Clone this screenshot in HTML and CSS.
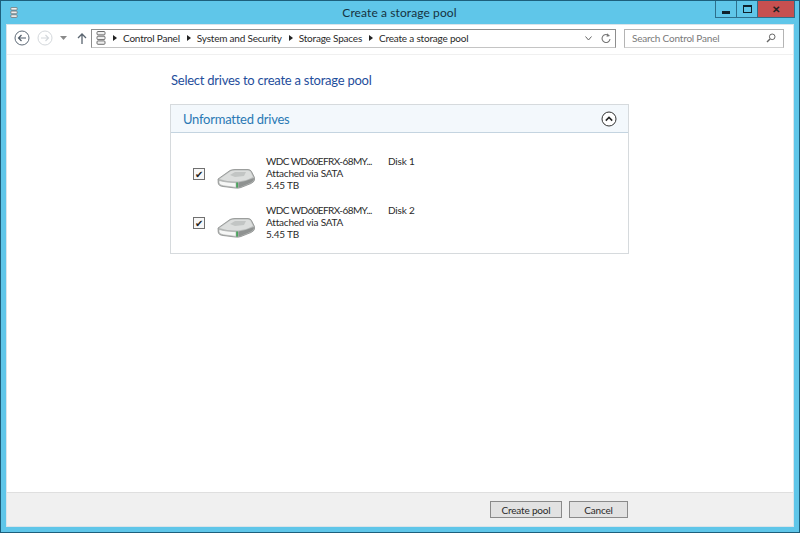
FILE: index.html
```html
<!DOCTYPE html>
<html lang="en">

<head>
  <meta charset="UTF-8">
  <title>Create a storage pool</title>
  <link rel="stylesheet" href="styles.css">
</head>

<body>
  <svg class="defs" width="0" height="0">
    <symbol id="stack" viewBox="0 0 10 14">
      <rect x="1" y="0.5" width="8" height="3.4" rx="1" fill="#eee" stroke="#6f6f6f" />
      <rect x="1" y="5.2" width="8" height="3.4" rx="1" fill="#eee" stroke="#6f6f6f" />
      <rect x="1" y="9.9" width="8" height="3.4" rx="1" fill="#eee" stroke="#6f6f6f" />
    </symbol>
    <symbol id="disk" viewBox="0 0 38 24">
      <path d="M1 13 L13 4.5 Q15 3.5 18 3.5 L31 3.5 Q33.5 3.5 34.5 5.5 L37.5 11.5 L37.5 14 Q37 16 34 17.5 L24 21.5 Q21.5 22.5 18 22 L6 20.5 Q1.5 20 1.2 17 Z" fill="#b9bcbb" stroke="#7f8281" stroke-width=".7" />
      <path d="M2.5 13 L14 5 Q15.5 4.4 18 4.4 L31 4.4 Q32.8 4.4 33.6 6 L36 11 Q30 14.5 21 15.5 Q9 15.5 2.5 13 Z" fill="#dcdedd" />
      <path d="M13 9 L18 6 L29 6 L27 10 L18 11 Z" fill="#c2c5c4" />
      <path d="M2 14.5 Q9 16.6 19 16.7 L19 21.4 L6.5 19.8 Q2.2 19.2 2 16.8 Z" fill="#f6f7f6" stroke="#9fa1a0" stroke-width=".5" />
      <rect x="19.2" y="16.4" width="1.8" height="5.2" fill="#4aa55e" />
      <path d="M21.4 16.4 Q30 15 36.8 12 L36.8 13.8 Q36.4 15.4 33.5 16.8 L24 20.7 Q22.6 21.2 21.4 21.3 Z" fill="#8f9291" />
    </symbol>
  </svg>

  <div class="window">
    <header class="titlebar">
      <svg class="titlebar__icon"><use href="#stack" /></svg>
      <h1 class="titlebar__text">Create a storage pool</h1>
      <div class="controls">
        <div class="controls__btn controls__btn--min"><span class="glyph-min"></span></div>
        <div class="controls__btn controls__btn--max"><span class="glyph-max"></span></div>
        <div class="controls__btn controls__btn--close">&#x2715;</div>
      </div>
    </header>

    <div class="client">
      <nav class="toolbar">
        <svg class="nav-icon" width="16" height="16" viewBox="0 0 16 16">
          <circle cx="8" cy="8" r="7" fill="#fff" stroke="#5f6b78" />
          <path d="M12 8H4.5M7.5 5L4.5 8L7.5 11" fill="none" stroke="#4f5b68" stroke-width="1.2" />
        </svg>
        <svg class="nav-icon nav-icon--fwd" width="16" height="16" viewBox="0 0 16 16">
          <circle cx="8" cy="8" r="7" fill="#fff" stroke="#d4d8dc" />
          <path d="M4 8H11.5M8.5 5L11.5 8L8.5 11" fill="none" stroke="#d4d8dc" stroke-width="1.2" />
        </svg>
        <svg class="nav-icon nav-icon--drop" width="7" height="4" viewBox="0 0 7 4">
          <path d="M0 0H7L3.5 4Z" fill="#8a8a8a" />
        </svg>
        <svg class="nav-icon nav-icon--up" width="10" height="11" viewBox="0 0 10 11">
          <path d="M5 11V1M1 5L5 1L9 5" fill="none" stroke="#5a6570" stroke-width="1.3" />
        </svg>

        <div class="address">
          <svg class="address__icon"><use href="#stack" /></svg>
          <span class="crumb">Control Panel</span>
          <span class="crumb">System and Security</span>
          <span class="crumb">Storage Spaces</span>
          <span class="crumb">Create a storage pool</span>
          <svg class="address__chev" width="7" height="5" viewBox="0 0 7 5">
            <path d="M.5 .5L3.5 4L6.5 .5" fill="none" stroke="#666" />
          </svg>
          <svg class="address__refresh" width="10" height="11" viewBox="0 0 10 11">
            <path d="M8 2.8A4 4 0 1 0 9 6" fill="none" stroke="#777" stroke-width="1.1" />
            <path d="M6 .3L9 3L5.6 3.8Z" fill="#777" />
          </svg>
        </div>

        <div class="search">
          <span class="search__text">Search Control Panel</span>
          <svg width="10" height="10" viewBox="0 0 10 10">
            <circle cx="6.2" cy="3.8" r="2.8" fill="none" stroke="#666" />
            <path d="M4 6L1 9" stroke="#666" stroke-width="1.4" />
          </svg>
        </div>
      </nav>

      <main class="main">
        <h2 class="main__title">Select drives to create a storage pool</h2>

        <section class="panel">
          <div class="panel__head">
            <span class="panel__label">Unformatted drives</span>
            <svg width="16" height="16" viewBox="0 0 16 16">
              <circle cx="8" cy="8" r="7" fill="#fff" stroke="#333" />
              <path d="M4.8 9.6L8 6.4L11.2 9.6" fill="none" stroke="#222" stroke-width="1.5" />
            </svg>
          </div>

          <div class="drive-list">
            <div class="drive">
              <span class="drive__check">&#x2714;</span>
              <svg class="drive__icon"><use href="#disk" /></svg>
              <div class="drive__info">
                <span class="drive__model">WDC WD60EFRX-68MY...</span>
                <span>Attached via SATA</span>
                <span>5.45 TB</span>
              </div>
              <span class="drive__name">Disk 1</span>
            </div>

            <div class="drive">
              <span class="drive__check">&#x2714;</span>
              <svg class="drive__icon"><use href="#disk" /></svg>
              <div class="drive__info">
                <span class="drive__model">WDC WD60EFRX-68MY...</span>
                <span>Attached via SATA</span>
                <span>5.45 TB</span>
              </div>
              <span class="drive__name">Disk 2</span>
            </div>
          </div>
        </section>
      </main>

      <footer class="footer">
        <button type="button" class="btn btn--create">Create pool</button>
        <button type="button" class="btn btn--cancel">Cancel</button>
      </footer>
    </div>
  </div>
</body>

</html>
```

FILE: styles.css
```css
* {
  box-sizing: border-box;
}

html,
body {
  height: 100%;
}

body {
  margin: 0;
  font-family: Lato, Roboto, sans-serif;
  font-size: 10px;
  letter-spacing: -.2px;
  color: #2a2a2a;
}

.defs {
  position: absolute;
}

.window {
  display: flex;
  flex-direction: column;
  height: 533px;
  padding: 0 5px 5px;
  background: #5fc6e9;
  border: 1px solid #1d5f7c;
}

.titlebar {
  display: flex;
  flex: none;
  align-items: flex-start;
  justify-content: space-between;
  height: 23px;
}

.titlebar__icon {
  width: 8px;
  height: 11px;
  margin: 6px 0 0 4px;
}

.titlebar__text {
  margin: 4px 0 0 66px;
  font-size: 12px;
  font-weight: 400;
  line-height: 16px;
  letter-spacing: .1px;
  color: #16323f;
}

.controls {
  display: flex;
  height: 17px;
  margin-right: -1px;
  border: 1px solid #2d6f8c;
  border-top: none;
}

.controls__btn {
  display: flex;
  align-items: center;
  justify-content: center;
  width: 21px;
  border-right: 1px solid #2d6f8c;
}

.controls__btn--close {
  width: 36px;
  border-right: none;
  background: #c75050;
  color: #222;
  font-size: 10px;
  font-weight: 700;
}

.glyph-min {
  width: 8px;
  height: 3px;
  margin-top: 6px;
  background: #10222c;
}

.glyph-max {
  width: 9px;
  height: 8px;
  border: 1px solid #10222c;
  border-top-width: 2px;
}

.client {
  display: flex;
  flex: 1;
  flex-direction: column;
  background: #fff;
  border: 1px solid #d9e4ea;
}

.toolbar {
  display: flex;
  flex: none;
  align-items: center;
  height: 30px;
  padding: 0 0 3px 7px;
  border-bottom: 1px solid #f0f0f0;
}

.nav-icon--fwd {
  margin-left: 7px;
}

.nav-icon--drop {
  margin-left: 7px;
}

.nav-icon--up {
  margin-left: 10px;
}

.address {
  display: flex;
  align-items: center;
  width: 525px;
  height: 19px;
  margin-left: 4px;
  padding: 0 4px 0 4px;
  border: 1px solid #8e8e8e;
  border-bottom-color: #c4c4c4;
}

.address__icon {
  width: 10px;
  height: 14px;
  margin-right: 7px;
}

.crumb {
  display: flex;
  align-items: center;
  margin-right: 7px;
  white-space: nowrap;
}

.crumb::before {
  content: "";
  margin-right: 6px;
  border-left: 4px solid #222;
  border-top: 3px solid transparent;
  border-bottom: 3px solid transparent;
}

.address__chev {
  margin-left: auto;
  margin-right: 9px;
}

.search {
  display: flex;
  align-items: center;
  justify-content: space-between;
  width: 160px;
  height: 19px;
  margin-left: 8px;
  padding: 0 7px;
  border: 1px solid #b4b4b4;
  border-bottom-color: #d0d0d0;
  color: #7a7a7a;
}

.main {
  flex: 1;
  padding: 16px 0 0 163px;
}

.main__title {
  margin: 0 0 15px 1px;
  font-size: 13px;
  font-weight: 400;
  line-height: 18px;
  letter-spacing: -.25px;
  color: #1f4e9c;
}

.panel {
  width: 459px;
  height: 150px;
  border: 1px solid #d6dadd;
}

.panel__head {
  display: flex;
  align-items: center;
  justify-content: space-between;
  height: 28px;
  padding: 0 11px 0 12px;
  background: #f3f8fc;
  border-bottom: 1px solid #c4d4e0;
}

.panel__label {
  font-size: 13px;
  letter-spacing: -.25px;
  color: #2a78b4;
}

.drive-list {
  display: flex;
  flex-direction: column;
  gap: 13px;
  padding: 22px 0 0 22px;
}

.drive {
  display: flex;
  align-items: center;
  height: 36px;
}

.drive__check {
  display: flex;
  align-items: center;
  justify-content: center;
  width: 12px;
  height: 12px;
  margin-top: 2px;
  background: #f7f7f7;
  border: 1px solid #707070;
  font-size: 10px;
  line-height: 1;
  color: #222;
}

.drive__icon {
  width: 38px;
  height: 24px;
  margin: 10px 0 0 12px;
}

.drive__info {
  display: flex;
  flex-direction: column;
  width: 122px;
  margin-left: 11px;
  line-height: 12px;
  white-space: nowrap;
}

.drive__model {
  letter-spacing: -.6px;
}

.drive__name {
  align-self: flex-start;
  line-height: 12px;
}

.footer {
  display: flex;
  flex: none;
  align-items: center;
  justify-content: flex-end;
  gap: 7px;
  height: 34px;
  padding-right: 165px;
  background: #f0f0f0;
  border-top: 1px solid #dfdfdf;
}

.btn {
  height: 17px;
  padding: 0;
  background: #e2e2e2;
  border: 1px solid #8a8a8a;
  border-radius: 0;
  font: inherit;
  line-height: 1;
  letter-spacing: inherit;
  color: #2a2a2a;
}

.btn--create {
  width: 72px;
}

.btn--cancel {
  width: 59px;
}
```
